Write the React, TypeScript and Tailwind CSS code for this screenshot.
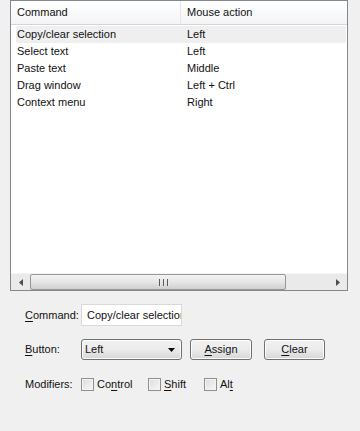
import { useState } from "react";

interface Binding {
  command: string;
  action: string;
}

const bindings: Binding[] = [
  { command: "Copy/clear selection", action: "Left" },
  { command: "Select text", action: "Left" },
  { command: "Paste text", action: "Middle" },
  { command: "Drag window", action: "Left + Ctrl" },
  { command: "Context menu", action: "Right" },
];

const Mnemonic = ({ text, at }: { text: string; at: number }) => (
  <span>
    {text.slice(0, at)}
    <span className="underline underline-offset-2">{text[at]}</span>
    {text.slice(at + 1)}
  </span>
);

const Checkbox = ({ label, at }: { label: string; at: number }) => (
  <label className="flex items-center gap-[3px]">
    <span className="w-[13px] h-[13px] border border-[#8f8f8f] bg-gradient-to-br from-[#dcdcdc] to-[#f8f8f8] shadow-[inset_0_0_0_1px_#f4f4f4]" />
    <Mnemonic text={label} at={at} />
  </label>
);

const WinButton = ({ children, className }: { children: React.ReactNode; className?: string }) => (
  <button
    className={
      "h-[21px] rounded-[3px] border border-[#707070] bg-gradient-to-b from-[#f2f2f2] via-[#ebebeb] to-[#d6d6d6] shadow-[inset_0_0_0_1px_#fcfcfc] text-[11px] " +
      (className ?? "")
    }
  >
    {children}
  </button>
);

export default function App() {
  const [selected] = useState(0);

  return (
    <div
      className="w-[360px] h-[431px] bg-[#f0f0f0] text-[11px] text-[#111] overflow-hidden"
      style={{ fontFamily: '"Liberation Sans", Arial, sans-serif' }}
    >
      {/* list view */}
      <div className="ml-[10px] w-[338px] h-[291px] border border-[#828790] bg-white flex flex-col">
        <div className="flex h-[24px] border-b border-[#d5d5d5] bg-gradient-to-b from-white to-[#f3f4f6]">
          <div className="w-[170px] pl-[6px] flex items-center border-r border-[#e3e5e8]">Command</div>
          <div className="flex-1 pl-[6px] flex items-center">Mouse action</div>
        </div>
        <div className="flex-1 pt-[1px]">
          {bindings.map((b, i) => (
            <div
              key={b.command}
              className={
                "flex h-[17px] items-center ml-[5px] mr-[1px] " + (i === selected ? "bg-[#efefef]" : "")
              }
            >
              <div className="w-[165px] pl-[1px]">{b.command}</div>
              <div className="flex-1 pl-[6px]">{b.action}</div>
            </div>
          ))}
        </div>
        {/* horizontal scrollbar */}
        <div className="h-[17px] flex items-stretch bg-[#eaeaea] border-t border-[#f4f4f4]">
          <div className="w-[19px] flex items-center justify-center">
            <svg width="4" height="7" viewBox="0 0 4 7">
              <path d="M4 0 L0 3.5 L4 7 Z" fill="#4d4d4d" />
            </svg>
          </div>
          <div className="w-[256px] rounded-[2px] border border-[#979797] bg-gradient-to-b from-[#f3f3f3] via-[#e6e6e6] to-[#cfcfcf] flex items-center justify-center">
            <div className="flex gap-[2px] h-[7px] ml-[12px]">
              <span className="w-[2px] h-full bg-[#5a5a5a] border-r border-[#e8e8e8]" />
              <span className="w-[2px] h-full bg-[#5a5a5a] border-r border-[#e8e8e8]" />
              <span className="w-[2px] h-full bg-[#5a5a5a] border-r border-[#e8e8e8]" />
            </div>
          </div>
          <div className="flex-1" />
          <div className="w-[19px] flex items-center justify-center">
            <svg width="4" height="7" viewBox="0 0 4 7">
              <path d="M0 0 L4 3.5 L0 7 Z" fill="#4d4d4d" />
            </svg>
          </div>
        </div>
      </div>

      {/* form */}
      <div className="pl-[25px] pt-[13px] flex flex-col">
        <div className="flex items-center h-[22px]">
          <span className="w-[56px]">
            <Mnemonic text="Command:" at={0} />
          </span>
          <div className="w-[101px] h-[22px] border border-[#d9d9d9] bg-white flex items-center pl-[5px] overflow-hidden whitespace-nowrap">
            Copy/clear selection
          </div>
        </div>

        <div className="flex items-center h-[21px] mt-[13px]">
          <span className="w-[56px]">
            <Mnemonic text="Button:" at={0} />
          </span>
          <div className="w-[101px] h-[21px] rounded-[3px] border border-[#707070] bg-gradient-to-b from-[#f2f2f2] via-[#ebebeb] to-[#d6d6d6] shadow-[inset_0_0_0_1px_#fcfcfc] flex items-center pl-[3px] pr-[6px]">
            <span className="flex-1">Left</span>
            <svg width="7" height="4" viewBox="0 0 7 4">
              <path d="M0 0 L7 0 L3.5 4 Z" fill="#000" />
            </svg>
          </div>
          <WinButton className="w-[62px] ml-[8px]">
            <Mnemonic text="Assign" at={0} />
          </WinButton>
          <WinButton className="w-[61px] ml-[12px]">
            <Mnemonic text="Clear" at={0} />
          </WinButton>
        </div>

        <div className="flex items-center h-[14px] mt-[17px]">
          <span className="w-[56px]">Modifiers:</span>
          <div className="w-[67px]">
            <Checkbox label="Control" at={2} />
          </div>
          <div className="w-[56px]">
            <Checkbox label="Shift" at={0} />
          </div>
          <Checkbox label="Alt" at={2} />
        </div>
      </div>
    </div>
  );
}
